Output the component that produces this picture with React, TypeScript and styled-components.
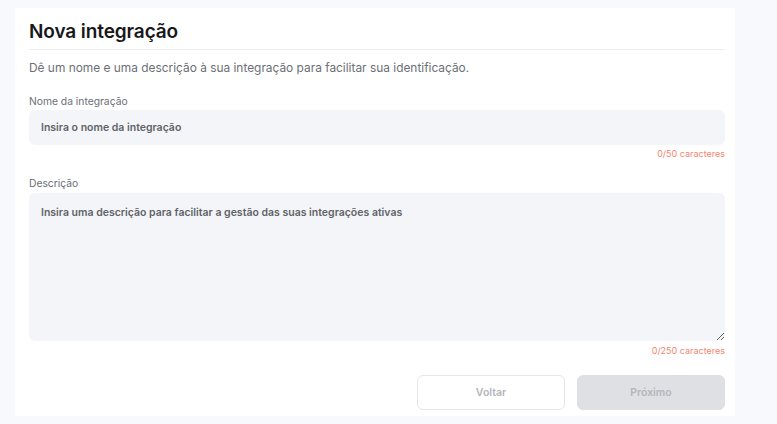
import React from "react";
import styled, { createGlobalStyle } from "styled-components";

const Global = createGlobalStyle`
  html, body { margin: 0; padding: 0; background: #f8f9fc; }
  body { font-family: Inter, "Noto Sans", sans-serif; -webkit-font-smoothing: antialiased; }
  * { box-sizing: border-box; }
`;

const Page = styled.div`
  width: 777px;
  height: 424px;
  padding: 8px 42px 8px 15px;
  background: #f8f9fc;
`;

const Card = styled.section`
  width: 720px;
  height: 408px;
  background: #ffffff;
  padding: 12px 10px 6px 14px;
  display: flex;
  flex-direction: column;
`;

const Title = styled.h1`
  margin: 0;
  font-size: 19px;
  line-height: 24px;
  font-weight: 600;
  color: #17181a;
  letter-spacing: -0.1px;
  padding-bottom: 5px;
  border-bottom: 1px solid #eceef2;
`;

const Subtitle = styled.p`
  margin: 10px 0 0;
  font-size: 11.9px;
  line-height: 16px;
  color: #6b6f76;
`;

const Label = styled.label<{ $top: number }>`
  display: block;
  margin-top: ${(p) => p.$top}px;
  font-size: 10.3px;
  line-height: 14px;
  color: #6b6f76;
`;

const fieldBase = `
  width: 100%;
  border: none;
  outline: none;
  background: #f4f5f8;
  border-radius: 6px;
  font-family: Inter, "Noto Sans", sans-serif;
  font-size: 10.5px;
  font-weight: 600;
  color: #5f6368;
  padding: 0 12px;
  &::placeholder { color: #5f6368; opacity: 1; }
`;

const Input = styled.input`
  ${fieldBase}
  margin-top: 2px;
  height: 35px;
`;

const TextArea = styled.textarea`
  ${fieldBase}
  display: block;
  margin-top: 3px;
  height: 148px;
  padding-top: 13px;
  line-height: 14px;
  resize: vertical;
`;

const Counter = styled.div<{ $top: number }>`
  margin-top: ${(p) => p.$top}px;
  text-align: right;
  font-size: 9px;
  line-height: 12px;
  color: #f3866f;
`;

const Actions = styled.div`
  margin-top: 18px;
  display: flex;
  justify-content: flex-end;
  gap: 12px;
`;

const Button = styled.button<{ $variant: "outline" | "filled" }>`
  width: 148px;
  height: 35px;
  border-radius: 6px;
  font-family: Inter, "Noto Sans", sans-serif;
  font-size: 10.5px;
  font-weight: 600;
  cursor: default;
  border: 1px solid ${(p) => (p.$variant === "outline" ? "#e4e6ea" : "#dfe0e4")};
  background: ${(p) => (p.$variant === "outline" ? "#ffffff" : "#dfe0e4")};
  color: ${(p) => (p.$variant === "outline" ? "#b3b5ba" : "#b4b6bb")};
`;

export default function App() {
  return (
    <>
      <Global />
      <Page>
        <Card>
          <Title>Nova integração</Title>
          <Subtitle>
            Dê um nome e uma descrição à sua integração para facilitar sua identificação.
          </Subtitle>
          <Label $top={18}>Nome da integração</Label>
          <Input placeholder="Insira o nome da integração" />
          <Counter $top={3}>0/50 caracteres</Counter>
          <Label $top={16}>Descrição</Label>
          <TextArea placeholder="Insira uma descrição para facilitar a gestão das suas integrações ativas" />
          <Counter $top={4}>0/250 caracteres</Counter>
          <Actions>
            <Button $variant="outline">Voltar</Button>
            <Button $variant="filled">Próximo</Button>
          </Actions>
        </Card>
      </Page>
    </>
  );
}
